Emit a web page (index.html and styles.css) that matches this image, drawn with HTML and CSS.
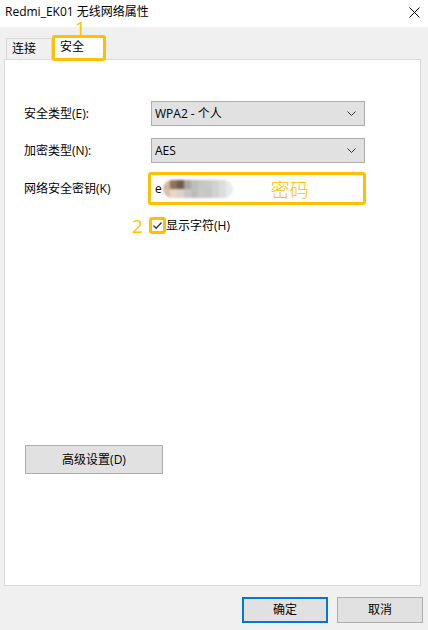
FILE: index.html
```html
<!DOCTYPE html>
<html lang="zh-CN">
<head>
<meta charset="utf-8">
<title>Redmi_EK01 无线网络属性</title>
<link rel="stylesheet" href="styles.css">
</head>
<body>
<div class="window">
  <div class="titlebar">
    <span class="title">Redmi_EK01 无线网络属性</span>
    <svg class="close" width="11" height="11" viewBox="0 0 11 11"><path d="M0.5 0.5 L10.5 10.5 M10.5 0.5 L0.5 10.5" stroke="#000" stroke-width="1" fill="none"/></svg>
  </div>
  <div class="tabs">
    <div class="tab">连接</div>
    <div class="tab active">安全<span class="mark mark-1">1</span></div>
  </div>
  <div class="panel">
    <div class="row">
      <span class="label">安全类型(E):</span>
      <div class="select"><span>WPA2 - 个人</span><svg class="chev" width="9" height="5" viewBox="0 0 9 5"><path d="M0.5 0.5 L4.5 4.5 L8.5 0.5" stroke="#333" stroke-width="1" fill="none"/></svg></div>
    </div>
    <div class="row row-2">
      <span class="label">加密类型(N):</span>
      <div class="select"><span>AES</span><svg class="chev" width="9" height="5" viewBox="0 0 9 5"><path d="M0.5 0.5 L4.5 4.5 L8.5 0.5" stroke="#333" stroke-width="1" fill="none"/></svg></div>
    </div>
    <div class="row row-3">
      <span class="label">网络安全密钥(K)</span>
      <div class="keybox">
        <span class="keychar">e</span>
        <div class="blur">
          <div class="cells"><i class="c1"></i><i class="c2"></i><i class="c3"></i><i class="c4"></i><i class="g1"></i><i class="g2"></i><i class="g3"></i><i class="g4"></i><i class="g5"></i><i class="g6"></i></div>
          <div class="cells"><i class="c5"></i><i class="c6"></i><i class="c7"></i><i class="g2"></i><i class="g1"></i><i class="g3"></i><i class="g2"></i><i class="g4"></i><i class="g5"></i><i class="g6"></i></div>
        </div>
        <span class="pwd-note">密码</span>
      </div>
    </div>
    <div class="checkrow">
      <span class="checkbox"><span class="mark mark-2">2</span><svg width="11" height="11" viewBox="0 0 11 11"><path d="M1.5 5.5 L4.2 8.2 L9.5 2.5" stroke="#333" stroke-width="1.3" fill="none"/></svg></span>
      <span class="checklabel">显示字符(H)</span>
    </div>
    <button class="btn adv">高级设置(D)</button>
  </div>
  <div class="footer">
    <button class="btn dlg primary">确定</button>
    <button class="btn dlg">取消</button>
  </div>
</div>
</body>
</html>
```
FILE: styles.css
```css
* { box-sizing: border-box; }
html, body { margin: 0; padding: 0; }
body {
  width: 428px;
  height: 630px;
  background: #f0f0f0;
  font-family: "Open Sans", "Noto Sans CJK SC", sans-serif;
  font-size: 12px;
  color: #000;
  overflow: hidden;
}
.window { width: 428px; height: 630px; display: flex; flex-direction: column; }
.titlebar {
  height: 27px;
  background: #fff;
  display: flex;
  align-items: center;
  justify-content: space-between;
  padding: 0 8px 3px 5px;
}
.title { font-size: 12px; line-height: 14px; }
.tabs {
  height: 32px;
  display: flex;
  align-items: flex-end;
  padding-left: 6px;
  position: relative;
  z-index: 2;
}
.tab {
  width: 46px;
  height: 21px;
  border: 1px solid #d9d9d9;
  border-bottom: none;
  padding: 0 0 0 5px;
  line-height: 19px;
  background: #f0f0f0;
}
.tab.active {
  position: relative;
  width: 54px;
  height: 26px;
  margin-bottom: -2px;
  border: 3px solid #ffc000;
  border-radius: 3px;
  background: #fff;
  padding-left: 5px;
  line-height: 17px;
}
.mark {
  position: absolute;
  color: #ffc000;
  font-family: "Open Sans", sans-serif;
  font-size: 19px;
  line-height: 13px;
  font-weight: 400;
}
.mark-1 { top: -16px; left: 20px; }
.mark-2 { top: 0px; left: -20px; }
.panel {
  margin: 0 7px 0 4px;
  height: 527px;
  border: 1px solid #d9d9d9;
  background: #fff;
  padding: 41px 0 0 19px;
  display: flex;
  flex-direction: column;
  position: relative;
  z-index: 1;
}
.row { display: flex; align-items: center; }
.row-2 { margin-top: 12px; }
.row-3 { margin-top: 9px; }
.label { width: 127px; flex: none; line-height: 16px; }
.select {
  width: 214px;
  height: 25px;
  border: 1px solid #adadad;
  background: #e1e1e1;
  display: flex;
  align-items: center;
  justify-content: space-between;
  padding: 0 8px 0 3px;
  line-height: 16px;
}
.chev { display: block; }
.keybox {
  margin-left: -3px;
  width: 218px;
  height: 33px;
  border: 3px solid #ffc000;
  border-radius: 3px;
  background: #fff;
  display: flex;
  align-items: center;
  padding-left: 4px;
}
.keychar { line-height: 16px; }
.blur {
  margin-left: 1px;
  width: 70px;
  height: 18px;
  border-radius: 9px;
  overflow: hidden;
  filter: blur(0.8px);
}
.cells { display: flex; height: 9px; }
.cells i { display: block; width: 7px; height: 9px; }
.c1 { background: #d4b49c; }
.c2 { background: #8f7262; }
.c3 { background: #6f5a4c; }
.c4 { background: #aaa39e; }
.c5 { background: #d8c0ae; }
.c6 { background: #ecd6c4; }
.c7 { background: #ddd3cb; }
.g1 { background: #bdbdbd; }
.g2 { background: #c6c6c6; }
.g3 { background: #cbc8c6; }
.g4 { background: #d2d2d2; }
.g5 { background: #dcdcdc; }
.g6 { background: #e8eaec; }
.pwd-note {
  margin-left: 38px;
  color: #ffc000;
  font-family: "Noto Sans CJK SC", sans-serif;
  font-size: 19px;
  line-height: 22px;
  font-weight: 300;
}
.checkrow {
  margin-top: 12px;
  padding-left: 125px;
  display: flex;
  align-items: center;
}
.checkbox {
  position: relative;
  width: 17px;
  height: 17px;
  border: 3px solid #ffc000;
  border-radius: 3px;
  background: #fff;
  display: flex;
  align-items: center;
  justify-content: center;
}
.checkbox svg { display: block; }
.checklabel { line-height: 16px; }
.btn {
  font-family: "Open Sans", "Noto Sans CJK SC", sans-serif;
  font-size: 12px;
  color: #000;
  background: #e1e1e1;
  border: 1px solid #adadad;
  padding: 0;
  line-height: 16px;
}
.adv {
  margin-top: 211px;
  margin-left: 1px;
  width: 138px;
  height: 29px;
}
.footer {
  margin-top: 11px;
  display: flex;
  justify-content: flex-end;
  gap: 9px;
  padding-right: 5px;
}
.dlg { width: 86px; height: 26px; }
.primary { border: 2px solid #0078d7; }
```
